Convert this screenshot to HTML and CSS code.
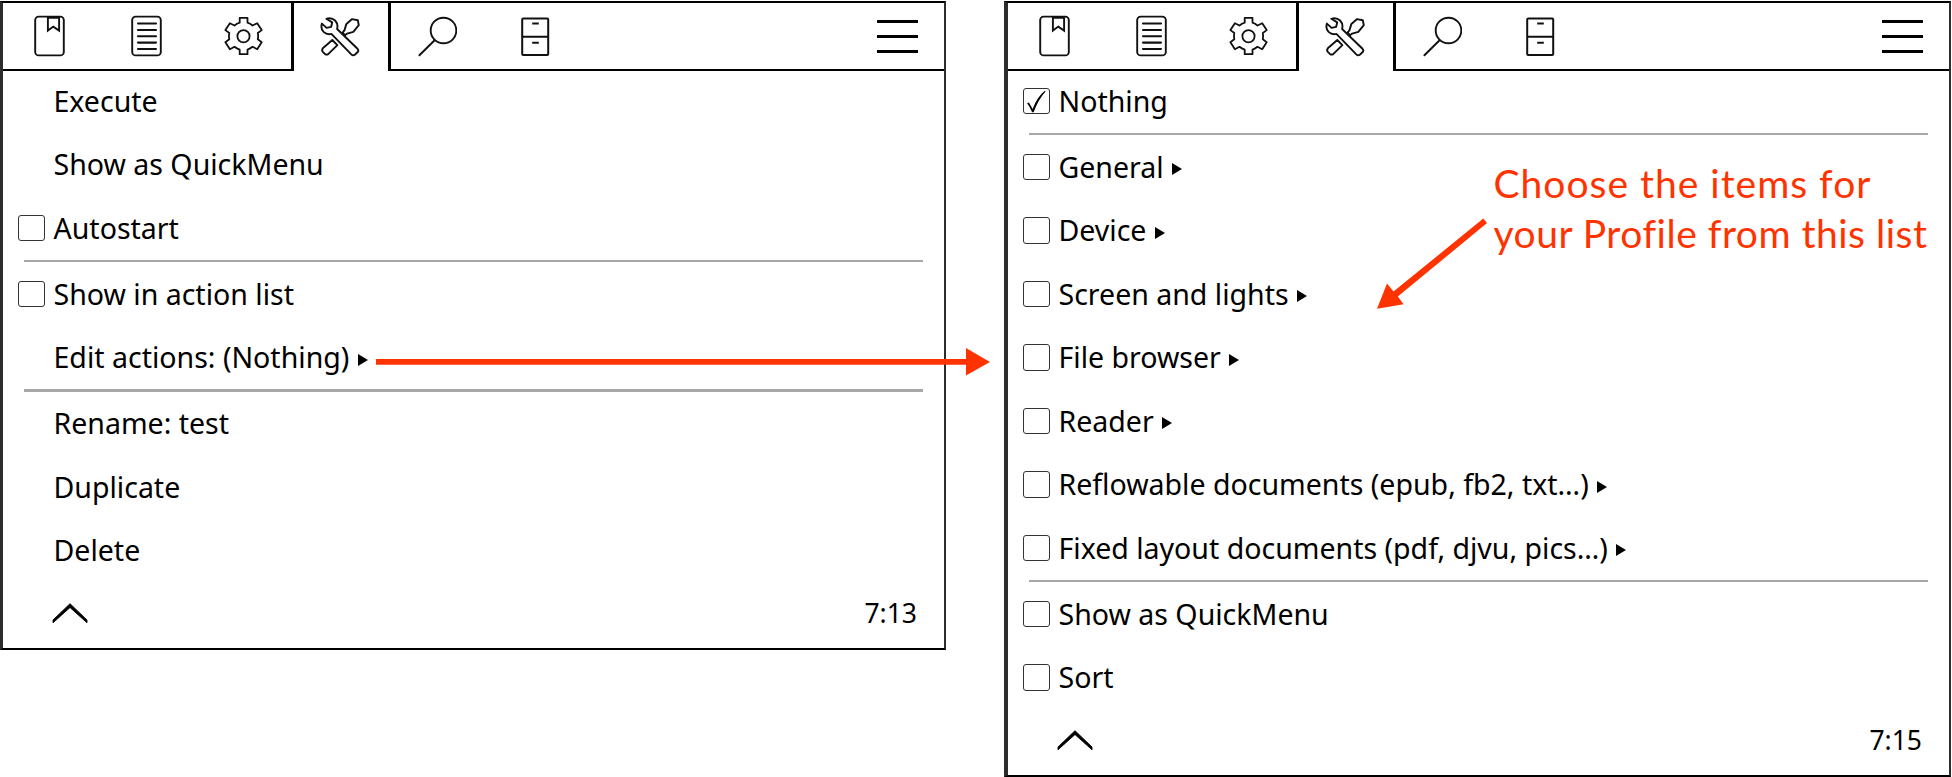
FILE: index.html
```
<!DOCTYPE html>
<html lang="en">
<head>
<meta charset="utf-8">
<title>Profile menu</title>
<link rel="stylesheet" href="styles.css">
</head>
<body>
<svg class="defs" aria-hidden="true">
  <symbol id="book" viewBox="0 0 40 48"><g fill="none" stroke="#111" stroke-width="1.9"><rect x="5.2" y="4.6" width="28.6" height="38.8" rx="3.5"/><path d="M17.9 5v13.6l5.4-4 5.8 4V5M18 5.7h11"/></g></symbol>
  <symbol id="page" viewBox="0 0 40 48"><g fill="none" stroke="#111" stroke-width="1.9"><rect x="5.2" y="4.6" width="28.6" height="38.8" rx="3.5"/><path stroke-width="2.1" stroke-linecap="round" d="M11 11.5h18M11 18h18M11 24.3h18M11 30.6h18M11 37h18"/></g></symbol>
  <symbol id="gear" viewBox="0 0 40 48"><g fill="none" stroke="#111" stroke-width="1.8" stroke-linejoin="round"><circle cx="19.5" cy="24.3" r="6.1"/><path d="M15.7 5.9h7.8v4.8q2.7.9 5 2.8l4.7-2.3 4.5 6.9-3.9 2.9q.7 3.3 0 6.3l3.9 2.9-4.5 7-4.7-2.4q-2.3 1.9-5 2.9v4.5h-7.8v-4.5q-2.9-1-5.2-2.9l-4.6 2.4-4.5-7 3.9-2.9q-.7-3.2 0-6.3l-3.9-2.9 4.5-6.9 4.6 2.3q2.3-1.9 5.2-2.8z"/></g></symbol>
  <symbol id="tools" viewBox="0 0 40 48"><g fill="none" stroke="#111" stroke-width="1.9" stroke-linejoin="round"><path d="M6.3 6.8q5-1.800 8.8 1.700 3.300 3.400 2 8.500L37.500 36.800q1.600 1.800 0 3.500l-2.700 2.400q-1.800 1.300-3.500-.3L11.400 21.900q-4.500 1.100-7.800-2Q.3 16.500 1.900 11.600l4.700 4.300 4.500-1 1.100-4.500z"/><path d="M24.400 18.400l2-6.500 5.700-4.800 5.700 1.100 1 5-5.500 6.700-6.100 1.700-2.200 1.600-2.400-2.500z"/><path d="M12.300 28l5.100 5.100-9 8.800q-1.700 1.400-3.500 0l-2.100-2.100q-1.400-1.800 0-3.500z"/></g></symbol>
  <symbol id="search" viewBox="0 0 40 48"><g fill="none" stroke="#111" stroke-width="1.9" stroke-linecap="round"><circle cx="26.5" cy="18.5" r="12.8"/><path d="M17.6 28.3L2.4 43.3"/></g></symbol>
  <symbol id="cabinet" viewBox="0 0 40 48"><g fill="none" stroke="#111" stroke-width="2"><rect x="7.2" y="6.6" width="26" height="36.5" rx="1"/><path d="M7.2 24.7h26M17.2 11.6h6.6M17.2 30.7h6.6"/></g></symbol>
  <symbol id="up" viewBox="0 0 36 22"><path d="M1 20.8V18L18 1.7 35 18v2.8L18 5.5z" fill="#000" stroke="#000" stroke-width=".9"/></symbol>
</svg>
<main class="stage">
  <section class="panel">
    <header class="tabs">
      <div class="group first"><svg class="icon"><use href="#book"/></svg><svg class="icon"><use href="#page"/></svg><svg class="icon"><use href="#gear"/></svg></div>
      <div class="active"><svg class="icon"><use href="#tools"/></svg></div>
      <div class="group rest"><svg class="icon"><use href="#search"/></svg><svg class="icon"><use href="#cabinet"/></svg><div class="burger"><i></i><i></i><i></i></div></div>
    </header>
    <div class="row"><span>Execute</span></div>
    <div class="row"><span>Show as QuickMenu</span></div>
    <div class="row"><b class="box"></b><span>Autostart</span></div>
    <hr>
    <div class="row"><b class="box"></b><span>Show in action list</span></div>
    <div class="row"><span>Edit actions: (Nothing)</span><i class="more"></i></div>
    <hr>
    <div class="row"><span>Rename: test</span></div>
    <div class="row"><span>Duplicate</span></div>
    <div class="row"><span>Delete</span></div>
    <footer><svg class="up"><use href="#up"/></svg><time>7:13</time></footer>
  </section>
  <section class="panel second">
    <header class="tabs">
      <div class="group first"><svg class="icon"><use href="#book"/></svg><svg class="icon"><use href="#page"/></svg><svg class="icon"><use href="#gear"/></svg></div>
      <div class="active"><svg class="icon"><use href="#tools"/></svg></div>
      <div class="group rest"><svg class="icon"><use href="#search"/></svg><svg class="icon"><use href="#cabinet"/></svg><div class="burger"><i></i><i></i><i></i></div></div>
    </header>
    <div class="row"><b class="box"><svg class="tick" viewBox="0 0 27 27"><path d="M4.2 15.500l1.800-.6 3.800 6.400Q14.500 9 22.300 2.900l.7.7Q15.500 12 10.800 24.700H9.300Q7 19 4.200 15.500z"/></svg></b><span>Nothing</span></div>
    <hr>
    <div class="row"><b class="box"></b><span>General</span><i class="more"></i></div>
    <div class="row"><b class="box"></b><span>Device</span><i class="more"></i></div>
    <div class="row"><b class="box"></b><span>Screen and lights</span><i class="more"></i></div>
    <div class="row"><b class="box"></b><span>File browser</span><i class="more"></i></div>
    <div class="row"><b class="box"></b><span>Reader</span><i class="more"></i></div>
    <div class="row"><b class="box"></b><span>Reflowable documents (epub, fb2, txt…)</span><i class="more"></i></div>
    <div class="row"><b class="box"></b><span>Fixed layout documents (pdf, djvu, pics…)</span><i class="more"></i></div>
    <hr>
    <div class="row"><b class="box"></b><span>Show as QuickMenu</span></div>
    <div class="row"><b class="box"></b><span>Sort</span></div>
    <footer><svg class="up"><use href="#up"/></svg><time>7:15</time></footer>
  </section>
  <svg class="arrows" viewBox="0 0 1952 777"><path d="M376 359h590v-11l24 13.900-24 13.700v-10.900H376z"/><path d="M1483.300 218.600l3.700 4.500-89.200 73.400 5.800 7.800-26.600 4.500 10-25.200 6.500 7.900z"/></svg>
  <p class="note"><span class="l1">Choose the items for</span><br><span class="l2">your Profile from this list</span></p>
</main>
</body>
</html>
```
FILE: styles.css
```
* { box-sizing: border-box; }
body { margin: 0; background: #fff; color: #000; font-family: "Noto Sans", sans-serif; }
.defs { position: absolute; width: 0; height: 0; }
.stage { position: relative; display: flex; align-items: flex-start; gap: 58px; width: 1952px; height: 777px; padding-top: 1px; overflow: hidden; }
.panel { width: 946px; flex: none; height: 649px; border: 2.5px solid #000; border-left: 3px solid #2d2d2d; border-right: 2px solid #2d2d2d; display: flex; flex-direction: column; }
.second { width: 947px; height: 776px; border-left-width: 4px; }
/* the list starts slightly above the lower edge of the tab bar */
.tabs { display: flex; height: 68px; flex: none; margin-bottom: -2px; }
.group { display: flex; align-items: center; border-bottom: 2px solid #000; }
.first { width: 291px; border-right: 3px solid #000; padding-left: 27px; gap: 57px; }
.active { width: 94px; display: flex; align-items: center; padding: 0 0 2px 26px; }
.rest { flex: 1; border-left: 3px solid #000; padding-left: 26px; gap: 57.5px; }
.icon { width: 40px; height: 48px; flex: none; }
.burger { margin-left: auto; margin-right: 26px; width: 41px; display: flex; flex-direction: column; gap: 12px; }
.burger i { height: 3px; background: #000; }
.row { height: 63.5px; flex: none; display: flex; align-items: center; padding-left: 50.5px; font-size: 28.52px; line-height: 40px; white-space: nowrap; }
.box { width: 26.5px; height: 26.5px; flex: none; margin-left: -35.5px; margin-right: 9px; border: 1.5px solid #333; border-radius: 3px; }
.tick { display: block; width: 26.5px; height: 26.5px; margin: -1px; }
.more { width: 0; height: 0; margin: 5px 0 0 8.5px; border-left: 10.5px solid #000; border-top: 6px solid transparent; border-bottom: 6px solid transparent; }
hr { width: auto; height: 2.5px; margin: 0 21px 0 20.5px; border: 0; background: #a8a8a8; flex: none; }
footer { display: flex; flex: none; height: 61.5px; align-items: center; justify-content: space-between; padding: 0 27px 0 49px; }
.up { width: 36px; height: 22px; }
time { font-size: 26.5px; line-height: 36px; }
.arrows { position: absolute; left: 0; top: 0; width: 1952px; height: 777px; fill: #ff3300; }
.note { position: absolute; left: 1493.5px; top: 158px; margin: 0; color: #ff3300; font-family: Lato, sans-serif; font-size: 39px; line-height: 50px; white-space: nowrap; }
.l1 { letter-spacing: 1px; }
.l2 { letter-spacing: .5px; }
```
